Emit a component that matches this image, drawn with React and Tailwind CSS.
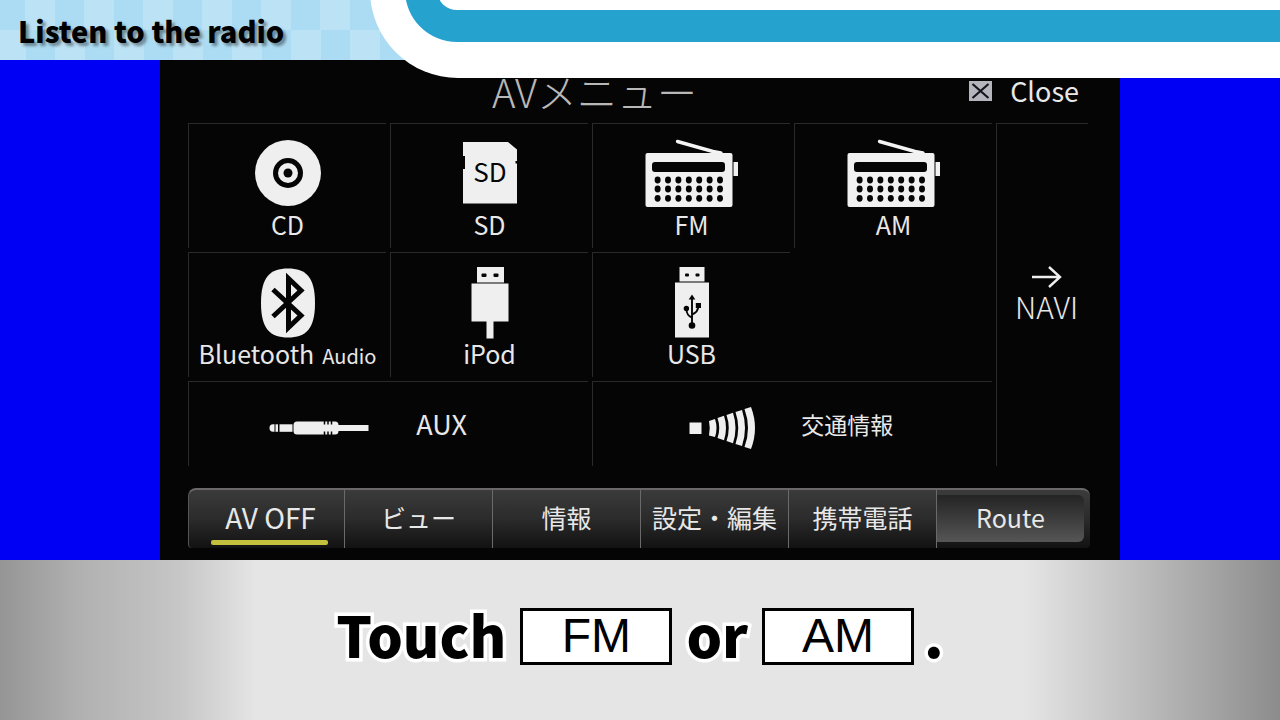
import React, { useState } from 'react';

const CdIcon = () => (
  <svg width="68" height="70" viewBox="0 0 68 70" aria-hidden="true">
    <circle cx="34" cy="34" r="33" fill="#efefef" />
    <circle cx="34" cy="34" r="15" fill="#060506" />
    <circle cx="34" cy="34" r="10" fill="#efefef" />
    <circle cx="34" cy="34" r="4.5" fill="#060506" />
  </svg>
);

const SdIcon = () => (
  <svg width="54" height="70" viewBox="0 0 54 70" aria-hidden="true">
    <path d="M0 3H45L54 10.500V22H52.500V24.500H54V64.500H0V30H2V17H0Z" fill="#efefef" />
    <text
      x="27"
      y="43"
      textAnchor="middle"
      fill="#060506"
      className="font-['Noto_Sans_CJK_JP',sans-serif] text-[26px]"
    >
      SD
    </text>
  </svg>
);

const RadioIcon = () => (
  <svg width="98" height="70" viewBox="0 0 98 70" aria-hidden="true">
    <path d="M34.500 2.500L70 12.500L78 14" stroke="#f4f4f4" strokeWidth="3.400" strokeLinecap="round" fill="none" />
    <rect x="2.500" y="14" width="87" height="54" rx="2" fill="#f1f1f1" />
    <rect x="90.500" y="23" width="4.500" height="14" fill="#f1f1f1" />
    <rect x="9" y="23" width="73" height="10" rx="3" fill="#060506" />
    {[41, 50, 59.3].map((y) =>
      [0, 1, 2, 3, 4, 5, 6].map((col) => (
        <ellipse key={`${y}-${col}`} cx={14.6 + col * 10.4} cy={y} rx="3" ry="3.400" fill="#060506" />
      ))
    )}
  </svg>
);

const BluetoothIcon = () => (
  <svg width="56" height="70" viewBox="0 0 56 70" aria-hidden="true">
    <path
      d="M28 .5C46 .5 55 9 55 35S46 69.500 28 69.500 1 61 1 35 10 .5 28 .5Z"
      fill="#efefef"
    />
    <path
      d="M13 21.500L41 47.500L28.500 59.500V10.500L41 22.500L13 48.500"
      stroke="#060506"
      strokeWidth="5"
      fill="none"
    />
  </svg>
);

const IpodIcon = () => (
  <svg width="38" height="72" viewBox="0 0 38 72" aria-hidden="true">
    <rect x="6" y="0" width="27" height="15.500" fill="#efefef" />
    <rect x="10.500" y="6.500" width="5" height="3.500" rx="1" fill="#060506" />
    <rect x="22.500" y="6.500" width="5" height="3.500" rx="1" fill="#060506" />
    <rect x="0.500" y="16.500" width="37" height="38" fill="#efefef" />
    <rect x="15.500" y="54" width="7" height="17.500" fill="#efefef" />
  </svg>
);

const UsbIcon = () => (
  <svg width="36" height="72" viewBox="0 0 36 72" aria-hidden="true">
    <rect x="5.500" y="0" width="25" height="14.500" fill="#efefef" />
    <rect x="11" y="6.500" width="4" height="3" rx="1" fill="#060506" />
    <rect x="21.500" y="6.500" width="4" height="3" rx="1" fill="#060506" />
    <rect x="1" y="15.500" width="34" height="55" fill="#efefef" />
    <g stroke="#060506" strokeWidth="1.900" fill="none">
      <path d="M18 58V31" />
      <path d="M18 50.500C14 49 12.500 47 12.500 41.500" />
      <path d="M18 47.500C23 45.500 24.300 43 24.300 39" />
    </g>
    <path d="M18 27.500L21.300 32.500H14.700Z" fill="#060506" />
    <circle cx="18" cy="58.500" r="3.300" fill="#060506" />
    <circle cx="12.400" cy="41.500" r="2.700" fill="#060506" />
    <rect x="21.800" y="36" width="5.200" height="5" fill="#060506" />
  </svg>
);

const AuxIcon = () => (
  <svg width="100" height="16" viewBox="0 0 100 16" aria-hidden="true">
    <g fill="#efefef">
      <path d="M4 4.300H5.500V11.800H4A3.500 3.750 0 0 1 4 4.300Z" />
      <rect x="6.500" y="4.300" width="2.500" height="7.500" />
      <rect x="10.500" y="4.300" width="13" height="7.500" />
      <rect x="24.500" y="1.500" width="45" height="13" rx="3.500" />
      <rect x="69" y="5" width="30.500" height="6" />
    </g>
    <path d="M55.500 1V4.500M59 1V4.500M62.500 1V4.500M55.500 11.500V15M59 11.500V15M62.500 11.500V15" stroke="#060506" strokeWidth="1.500" />
  </svg>
);

const TrafficIcon = () => (
  <svg width="68" height="42" viewBox="0 0 68 42" aria-hidden="true">
    <rect x="0.500" y="15.500" width="12" height="11.500" fill="#efefef" />
    <g fill="#efefef">
      <path d="M20 14L26 12Q29 21 26 30L20 28.500Q21.500 21 20 14Z" />
      <path d="M28.500 11L35 8.800Q39 21 35 33.200L28.500 31Q32 21 28.500 11Z" />
      <path d="M37.500 8L44 5.800Q49 21 44 36.200L37.500 34Q42 21 37.500 8Z" />
      <path d="M46.500 5L53 3Q59 21 53 39L46.500 37Q52 21 46.500 5Z" />
      <path d="M55.500 2L62 0Q70 21 62 42L55.500 40Q62.500 21 55.500 2Z" />
    </g>
  </svg>
);

const ArrowIcon = () => (
  <svg width="30" height="22" viewBox="0 0 30 22" aria-hidden="true">
    <path d="M0 11H28M17 1L28 11L17 21" stroke="#efefef" strokeWidth="2.400" fill="none" />
  </svg>
);

const CloseIcon = () => (
  <svg width="23" height="20" viewBox="0 0 23 20" aria-hidden="true">
    <rect width="23" height="20" fill="#b4b5bd" />
    <path d="M3.500 3L19.500 17M19.500 3L3.500 17" stroke="#15161c" strokeWidth="2.200" />
  </svg>
);

const SOURCES = [
  { id: 'cd', label: 'CD', Icon: CdIcon },
  { id: 'sd', label: 'SD', Icon: SdIcon },
  { id: 'fm', label: 'FM', Icon: RadioIcon },
  { id: 'am', label: 'AM', Icon: RadioIcon },
  { id: 'bluetooth', label: 'Bluetooth', suffix: 'Audio', Icon: BluetoothIcon },
  { id: 'ipod', label: 'iPod', Icon: IpodIcon },
  { id: 'usb', label: 'USB', Icon: UsbIcon },
];

const TABS = [
  { label: 'AV OFF', className: 'flex-[148] pl-2 text-[28px]' },
  { label: 'ビュー', className: 'flex-[148] text-[25px]' },
  { label: '情報', className: 'flex-[148] text-[25px]' },
  { label: '設定・編集', className: 'flex-[148] text-[25px]' },
  { label: '携帯電話', className: 'flex-[148] text-[25px]' },
];

const SourceButton = ({ label, suffix, Icon }) => (
  <button type="button" className="flex flex-col items-center border-l border-t border-[#2b2a2b] pt-[15px]">
    <span className="flex h-[69px] items-center justify-center">
      <Icon />
    </span>
    <span className="whitespace-nowrap text-[25px] leading-8">
      {label}
      {suffix && <span className="ml-2 text-[20px]">{suffix}</span>}
    </span>
  </button>
);

const WideButton = ({ label, labelClass, Icon }) => (
  <button
    type="button"
    className="col-span-2 grid grid-cols-[65%_1fr] items-center border-l border-t border-[#2b2a2b] text-left"
  >
    <span className="flex justify-center pt-2">
      <Icon />
    </span>
    <span className={labelClass}>{label}</span>
  </button>
);

const Banner = () => (
  <header className="relative z-10 h-[60px] bg-[conic-gradient(#bce2f5_25%,#acdcf3_0_50%,#bce2f5_0_75%,#acdcf3_0)] bg-[length:59px_60px] bg-[position:-4px_0]">
    <h1 className="pl-[18px] font-['Noto_Sans_CJK_JP',sans-serif] text-[29px] leading-[60px] font-black text-black [text-shadow:3px_3px_3px_rgb(0_0_0/0.4)]">
      Listen to the radio
    </h1>
    {/* Rounded ribbon that runs off the top right corner */}
    <div className="absolute top-0 right-0 left-[370px] overflow-hidden">
      <div className="-mt-[10px] rounded-bl-[88px] bg-white pb-[36px] pl-[35px]">
        <div className="rounded-bl-[52px] bg-[#26a2ce] pb-8 pl-8">
          <div className="h-5 rounded-bl-[20px] bg-white" />
        </div>
      </div>
    </div>
  </header>
);

const AvScreen = () => {
  const [activeTab, setActiveTab] = useState('AV OFF');

  return (
    <section className="mx-auto w-3/4 bg-[#060506] pr-[30px] pb-3 pl-7 font-['Noto_Sans_CJK_JP',sans-serif] text-[#e8e8e8]">
      <div className="flex items-center pt-[11px] pr-[11px] pb-3">
        <h2 className="flex-1 pl-8 text-center text-[40px] leading-10 font-extralight text-[#b8b8b8]">
          AVメニュー
        </h2>
        <button type="button" className="flex items-center gap-[18px] text-[27px] leading-8">
          <CloseIcon />
          Close
        </button>
      </div>

      <div className="mr-0.5 grid grid-cols-[repeat(4,minmax(0,1fr))_92px] grid-rows-[125px_125px_85px] gap-1">
        {SOURCES.slice(0, 4).map((source) => (
          <SourceButton key={source.id} {...source} />
        ))}
        <button
          type="button"
          className="row-span-3 flex flex-col items-center justify-center border-l border-t border-[#2b2a2b] pl-2 text-[30px] leading-9 font-light"
        >
          <ArrowIcon />
          NAVI
        </button>
        {SOURCES.slice(4).map((source) => (
          <SourceButton key={source.id} {...source} />
        ))}
        <span />
        <WideButton label="AUX" labelClass="-ml-8 text-[27px]" Icon={AuxIcon} />
        <WideButton label="交通情報" labelClass="-ml-[51px] text-[23px]" Icon={TrafficIcon} />
      </div>

      <nav className="mt-[22px] flex h-[60px] overflow-hidden rounded-t-lg rounded-b border-t-2 border-l border-t-[#6b6869] border-l-[#555] bg-linear-to-b from-[#3b3b3b] via-[#2b2b2b] to-[#121212]">
        {TABS.map(({ label, className }) => (
          <button
            key={label}
            type="button"
            onClick={() => setActiveTab(label)}
            className={`relative border-r border-[#6a6a6a] pb-1 leading-8 whitespace-nowrap ${className}`}
          >
            {label}
            {activeTab === label && (
              <span className="absolute right-4 bottom-[3px] left-[22px] h-[5px] rounded-xs bg-[#c2c03c]" />
            )}
          </button>
        ))}
        <div className="flex flex-[154]">
          <button
            type="button"
            className="mt-[5px] mr-1.5 mb-1.5 flex-1 rounded-r-md bg-linear-to-b from-[#242424] to-[#565656] pb-1 text-[25px] leading-8"
          >
            Route
          </button>
        </div>
      </nav>
    </section>
  );
};

const Key = ({ children }) => (
  <kbd className="flex h-[57px] w-[152px] items-center justify-center border-3 border-black bg-white font-['Liberation_Sans',sans-serif] text-[48px] leading-none font-normal">
    {children}
  </kbd>
);

const Word = ({ children, className = '' }) => (
  <span className={`pb-1 [-webkit-text-stroke:7px_white] [paint-order:stroke_fill] ${className}`}>{children}</span>
);

const Instruction = () => (
  <footer className="bg-[linear-gradient(to_right,#959595,#b0b0b0_6%,#c6c6c6_14%,#e5e5e5_20%,#e5e5e5_80%,#cfcfcf_85%,#b4b4b4_91%,#8c8c8c)] pt-[38px] pb-[46px]">
    <p className="flex items-center justify-center gap-[14px] font-['Noto_Sans_CJK_JP',sans-serif] text-[56px] leading-[72px] font-black text-black">
      <Word>Touch</Word>
      <Key>FM</Key>
      <Word>or</Word>
      <Key>AM</Key>
      <Word className="-ml-1">.</Word>
    </p>
  </footer>
);

const App = () => (
  <div className="min-h-screen bg-[#e5e5e5]">
    <Banner />
    <main className="bg-[#0000f4]">
      <AvScreen />
    </main>
    <Instruction />
  </div>
);

export default App;
